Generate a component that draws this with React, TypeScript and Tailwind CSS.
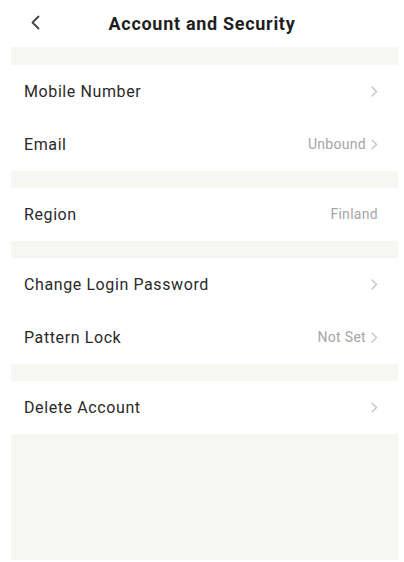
import React from "react";

type Row = { label: string; value?: string; arrow?: boolean };

const groups: Row[][] = [
  [
    { label: "Mobile Number", arrow: true },
    { label: "Email", value: "Unbound", arrow: true },
  ],
  [{ label: "Region", value: "Finland" }],
  [
    { label: "Change Login Password", arrow: true },
    { label: "Pattern Lock", value: "Not Set", arrow: true },
  ],
  [{ label: "Delete Account", arrow: true }],
];

function Chevron() {
  return (
    <svg width="7" height="11" viewBox="0 0 7 11" fill="none" className="ml-[5px]">
      <path d="M1 1l4.5 4.5L1 10" stroke="#c4c4c4" strokeWidth="1.4" strokeLinecap="round" strokeLinejoin="round" />
    </svg>
  );
}

function SettingRow({ label, value, arrow }: Row) {
  return (
    <div className="flex h-[53px] items-center justify-between pl-[13px] pr-[20px]">
      <span className="text-[16px] tracking-[0.6px] text-[#2a2a2a]">{label}</span>
      <div className="flex items-center">
        {value && <span className="text-[14px] tracking-[0.3px] text-[#a6a6a6]">{value}</span>}
        {arrow && <Chevron />}
      </div>
    </div>
  );
}

export default function App() {
  return (
    <div className="h-[562px] w-[404px] bg-white font-['Roboto','Liberation_Sans',sans-serif]">
      {/* Header */}
      <div className="relative flex h-[47px] items-center justify-center">
        <button className="absolute left-[30px] top-[15px]" aria-label="Back">
          <svg width="11" height="15" viewBox="0 0 11 15" fill="none">
            <path d="M8.5 1.5L2.5 7.5l6 6" stroke="#444" strokeWidth="1.8" strokeLinecap="round" strokeLinejoin="round" />
          </svg>
        </button>
        <h1 className="text-[18px] font-bold tracking-[0.7px] text-[#1f1f1f]">Account and Security</h1>
      </div>

      <div className="ml-[11px] mr-[6px]">
        <div className="h-[18px] bg-[#f6f6f3]" />
        {groups.map((g, i) => (
          <div key={i}>
            {i > 0 && <div className="h-[17px] bg-[#f6f6f3]" />}
            {g.map((r) => (
              <SettingRow key={r.label} {...r} />
            ))}
          </div>
        ))}
        <div className="h-[126px] bg-[#f6f6f3]" />
      </div>
    </div>
  );
}
